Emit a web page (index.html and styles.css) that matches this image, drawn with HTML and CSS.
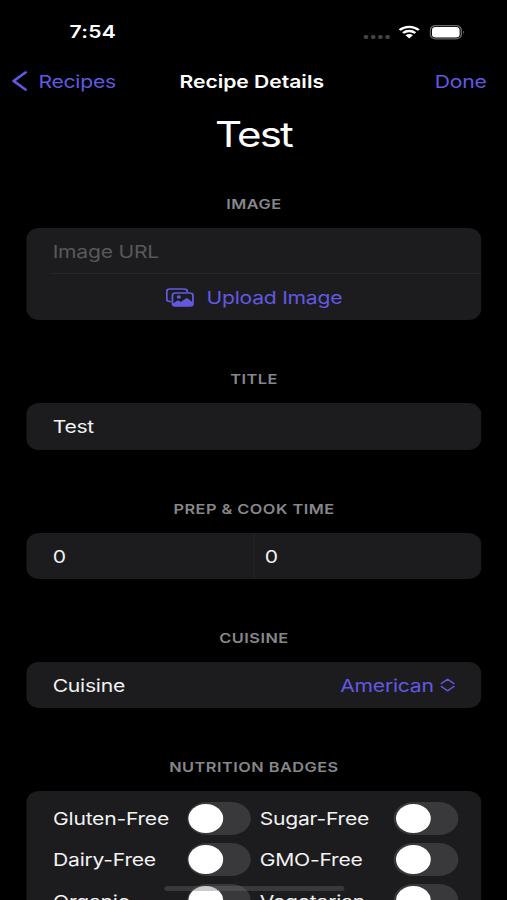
FILE: index.html
```html
<!DOCTYPE html>
<html lang="en">
<head>
<meta charset="utf-8">
<title>Recipe Details</title>
<link rel="stylesheet" href="styles.css">
</head>
<body>
<div class="screen">
  <header class="status">
    <span class="time">7:54</span>
    <div class="indicators">
      <span class="dots"><i></i><i></i><i></i><i></i></span>
      <svg class="wifi" viewBox="0 0 18 14" width="18" height="14"><path d="M1 5C5.500 .7 12.500 .7 17 5M3.900 8C6.800 5.300 11.200 5.300 14.100 8" fill="none" stroke="#fff" stroke-width="2.300"/><path d="M5.900 10.200Q9 7.700 12.100 10.200L9 13.500Z" fill="#fff"/></svg>
      <svg class="battery" viewBox="0 0 30 15" width="30" height="15"><rect x=".6" y=".6" width="25.800" height="13.300" rx="4.300" fill="none" stroke="#686868" stroke-width="1.200"/><rect x="2" y="2" width="23" height="10.500" rx="3" fill="#fff"/><path d="M28 5.300Q29.500 7.200 28 9.200Z" fill="#777"/></svg>
    </div>
  </header>
  <nav class="nav">
    <a class="back"><svg viewBox="0 0 13 20" width="13" height="20"><path d="M11.300 1.400L1.400 10L11.300 18.600" fill="none" stroke="#6259e2" stroke-width="2.400" stroke-linecap="round" stroke-linejoin="round"/></svg><span>Recipes</span></a>
    <span class="nav-title">Recipe Details</span>
    <a class="done">Done</a>
  </nav>
  <h1>Test</h1>
  <main>
    <section>
      <h2>IMAGE</h2>
      <div class="card">
        <div class="row placeholder">Image URL</div>
        <div class="row upload">
          <svg viewBox="0 0 24 19" width="24" height="19"><path d="M4.500 13.500H3.500Q1 13.500 1 11V3.500Q1 1 3.500 1H15.500Q18 1 18 3.500V4" fill="none" stroke="#6259e2" stroke-width="1.500"/><rect x="5.700" y="5" width="17.100" height="13" rx="2.500" fill="none" stroke="#6259e2" stroke-width="1.500"/><circle cx="11" cy="9" r="1.700" fill="#6259e2"/><path d="M6 15.700L9.500 12.700Q10.300 12.200 11.100 12.800L12.800 14L16.800 10.400Q17.700 9.800 18.500 10.600L22.500 14.300V16Q22.500 18 20.500 18H8Q6 18 6 16Z" fill="#6259e2"/></svg>
          <span>Upload Image</span>
        </div>
      </div>
    </section>
    <section>
      <h2>TITLE</h2>
      <div class="card"><div class="row">Test</div></div>
    </section>
    <section>
      <h2>PREP &amp; COOK TIME</h2>
      <div class="card times"><div class="row">0</div><div class="row">0</div></div>
    </section>
    <section>
      <h2>CUISINE</h2>
      <div class="card"><div class="row picker"><span>Cuisine</span><span class="value">American <svg viewBox="0 0 12 14" width="12" height="14"><path d="M.8 5.500L6 1.200L11.200 5.500M.8 8.500L6 12.800L11.200 8.500" fill="none" stroke="#6259e2" stroke-width="1.400" stroke-linecap="round" stroke-linejoin="round"/></svg></span></div></div>
    </section>
    <section>
      <h2>NUTRITION BADGES</h2>
      <div class="card badges">
        <label><span>Gluten-Free</span><i class="switch"></i></label>
        <label><span>Sugar-Free</span><i class="switch"></i></label>
        <label><span>Dairy-Free</span><i class="switch"></i></label>
        <label><span>GMO-Free</span><i class="switch"></i></label>
        <label><span>Organic</span><i class="switch"></i></label>
        <label><span>Vegetarian</span><i class="switch"></i></label>
      </div>
    </section>
  </main>
  <div class="home"></div>
</div>
</body>
</html>
```
FILE: styles.css
```css
* { box-sizing: border-box; }
html, body { margin: 0; height: 900px; overflow: hidden; background: #000; }
/* The layout is drawn 422.5px wide and stretched across the window. */
.screen {
  position: relative;
  width: 422.5px;
  height: 900px;
  overflow: hidden;
  transform: scaleX(1.2);
  transform-origin: 0 0;
  background: #000;
  color: #f2f2f3;
  font: 400 17.6px/24px Inter, "Liberation Sans", sans-serif;
  letter-spacing: -.2px;
}
.status { height: 63px; padding: 1px 34.500px 0 58px; display: flex; align-items: center; justify-content: space-between; }
.time { font-weight: 600; font-size: 17.600px; letter-spacing: .2px; color: #fff; }
.indicators { display: flex; align-items: center; }
.dots { display: flex; gap: 2.400px; margin: 9px 7.500px 0 0; }
.dots i { width: 3.500px; height: 4px; border-radius: 50%; background: #454547; }
.wifi { margin-right: 8px; }
.nav { height: 36px; padding: 0 17px 0 10px; display: grid; grid-template-columns: 1fr auto 1fr; align-items: center; color: #6259e2; }
.back { display: flex; align-items: center; gap: 9px; }
.back span, .nav-title, .done { padding-top: 1px; }
.nav-title { padding-left: 4px; font-weight: 600; letter-spacing: -.02px; color: #fff; }
.done { text-align: right; }
h1 { margin: 15px 0 0; height: 40px; text-align: center; font-size: 35px; line-height: 40px; font-weight: 400; letter-spacing: -1.500px; color: #fff; }
main { padding: 41px 21.400px 0 22.200px; }
section { margin-bottom: 50px; }
h2 { margin: 0; padding-top: 1px; height: 33px; text-align: center; font-size: 13.600px; line-height: 16px; font-weight: 600; letter-spacing: .4px; color: #87878b; }
.card { background: #1c1c1e; border-radius: 11px; }
.row { height: 46.200px; padding: 2px 21.700px 0; display: flex; align-items: center; }
.placeholder { color: #58585b; background: linear-gradient(#262628, #262628) 20px 100% / 100% 1px no-repeat; }
.upload { justify-content: center; gap: 10px; padding-top: 1px; color: #6259e2; }
.upload span { padding-top: 1px; }
.times { display: grid; grid-template-columns: 188.500px 1fr; }
.times .row + .row { padding-left: 9px; border-left: 1px solid #252527; }
.picker { justify-content: space-between; }
.value { display: flex; align-items: center; gap: 6px; color: #6259e2; }
.value svg { margin-top: -1px; }
.badges { padding: 7px 19.400px 0 22px; display: grid; grid-template-columns: 1fr 1fr; column-gap: 7px; grid-auto-rows: 41.200px; height: 160px; }
.badges label { display: flex; align-items: center; justify-content: space-between; white-space: nowrap; }
.badges span { padding-top: 1.500px; }
.switch { width: 53.700px; height: 33px; padding: 2px 1.500px; border-radius: 17px; background: #39393c; }
.switch::before { content: ""; display: block; width: 29px; height: 29px; border-radius: 50%; background: #fff; }
.home { position: absolute; left: 136.700px; top: 886px; width: 150px; height: 5px; border-radius: 3px; background: rgba(112, 112, 114, .36); }
```
